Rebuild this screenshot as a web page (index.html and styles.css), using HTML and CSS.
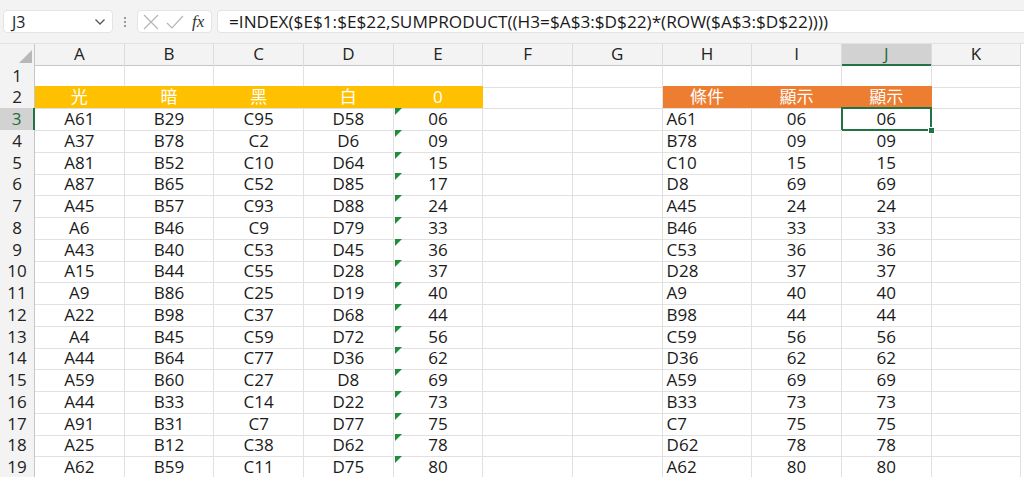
FILE: index.html
```html
<!DOCTYPE html>
<html lang="zh-Hant">
<head>
<meta charset="utf-8">
<title>Excel</title>
<link rel="stylesheet" href="styles.css">
</head>
<body>
<div class="topbar">
  <div class="namebox"><span class="ref">J3</span>
    <svg class="chev" width="12" height="8" viewBox="0 0 12 8"><path d="M1.5 1.5 L6 6 L10.5 1.5" fill="none" stroke="#555" stroke-width="1.3"/></svg>
  </div>
  <div class="dots"><i></i><i></i><i></i></div>
  <div class="fxbox">
    <svg width="18" height="18" viewBox="0 0 18 18"><path d="M2 2 L16 16 M16 2 L2 16" stroke="#b5b5b5" stroke-width="1.2" fill="none"/></svg>
    <svg width="20" height="18" viewBox="0 0 20 18"><path d="M2 10 L7 15 L18 3" stroke="#b5b5b5" stroke-width="1.2" fill="none"/></svg>
    <span class="fx">fx</span>
  </div>
  <div class="formula">=INDEX($E$1:$E$22,SUMPRODUCT((H3=$A$3:$D$22)*(ROW($A$3:$D$22))))</div>
</div>
<div class="sheet">
  <div class="r hdr"><div class="corner"></div><div>A</div><div>B</div><div>C</div><div>D</div><div>E</div><div>F</div><div>G</div><div>H</div><div>I</div><div class="selh">J</div><div>K</div></div>
  <div class="r"><div class="rh">1</div><div></div><div></div><div></div><div></div><div></div><div></div><div></div><div></div><div></div><div></div><div></div></div>
  <div class="r"><div class="rh">2</div><div class="y">光</div><div class="y">暗</div><div class="y">黑</div><div class="y">白</div><div class="y">0</div><div></div><div></div><div class="o">條件</div><div class="o">顯示</div><div class="o">顯示</div><div></div></div>
  <div class="r"><div class="rh selr">3</div><div>A61</div><div>B29</div><div>C95</div><div>D58</div><div class="t">06</div><div></div><div></div><div class="l">A61</div><div>06</div><div class="sel">06</div><div></div></div>
  <div class="r"><div class="rh">4</div><div>A37</div><div>B78</div><div>C2</div><div>D6</div><div class="t">09</div><div></div><div></div><div class="l">B78</div><div>09</div><div>09</div><div></div></div>
  <div class="r"><div class="rh">5</div><div>A81</div><div>B52</div><div>C10</div><div>D64</div><div class="t">15</div><div></div><div></div><div class="l">C10</div><div>15</div><div>15</div><div></div></div>
  <div class="r"><div class="rh">6</div><div>A87</div><div>B65</div><div>C52</div><div>D85</div><div class="t">17</div><div></div><div></div><div class="l">D8</div><div>69</div><div>69</div><div></div></div>
  <div class="r"><div class="rh">7</div><div>A45</div><div>B57</div><div>C93</div><div>D88</div><div class="t">24</div><div></div><div></div><div class="l">A45</div><div>24</div><div>24</div><div></div></div>
  <div class="r"><div class="rh">8</div><div>A6</div><div>B46</div><div>C9</div><div>D79</div><div class="t">33</div><div></div><div></div><div class="l">B46</div><div>33</div><div>33</div><div></div></div>
  <div class="r"><div class="rh">9</div><div>A43</div><div>B40</div><div>C53</div><div>D45</div><div class="t">36</div><div></div><div></div><div class="l">C53</div><div>36</div><div>36</div><div></div></div>
  <div class="r"><div class="rh">10</div><div>A15</div><div>B44</div><div>C55</div><div>D28</div><div class="t">37</div><div></div><div></div><div class="l">D28</div><div>37</div><div>37</div><div></div></div>
  <div class="r"><div class="rh">11</div><div>A9</div><div>B86</div><div>C25</div><div>D19</div><div class="t">40</div><div></div><div></div><div class="l">A9</div><div>40</div><div>40</div><div></div></div>
  <div class="r"><div class="rh">12</div><div>A22</div><div>B98</div><div>C37</div><div>D68</div><div class="t">44</div><div></div><div></div><div class="l">B98</div><div>44</div><div>44</div><div></div></div>
  <div class="r"><div class="rh">13</div><div>A4</div><div>B45</div><div>C59</div><div>D72</div><div class="t">56</div><div></div><div></div><div class="l">C59</div><div>56</div><div>56</div><div></div></div>
  <div class="r"><div class="rh">14</div><div>A44</div><div>B64</div><div>C77</div><div>D36</div><div class="t">62</div><div></div><div></div><div class="l">D36</div><div>62</div><div>62</div><div></div></div>
  <div class="r"><div class="rh">15</div><div>A59</div><div>B60</div><div>C27</div><div>D8</div><div class="t">69</div><div></div><div></div><div class="l">A59</div><div>69</div><div>69</div><div></div></div>
  <div class="r"><div class="rh">16</div><div>A44</div><div>B33</div><div>C14</div><div>D22</div><div class="t">73</div><div></div><div></div><div class="l">B33</div><div>73</div><div>73</div><div></div></div>
  <div class="r"><div class="rh">17</div><div>A91</div><div>B31</div><div>C7</div><div>D77</div><div class="t">75</div><div></div><div></div><div class="l">C7</div><div>75</div><div>75</div><div></div></div>
  <div class="r"><div class="rh">18</div><div>A25</div><div>B12</div><div>C38</div><div>D62</div><div class="t">78</div><div></div><div></div><div class="l">D62</div><div>78</div><div>78</div><div></div></div>
  <div class="r"><div class="rh">19</div><div>A62</div><div>B59</div><div>C11</div><div>D75</div><div class="t">80</div><div></div><div></div><div class="l">A62</div><div>80</div><div>80</div><div></div></div>
</div>
</body>
</html>
```
FILE: styles.css
```css
html, body {
  margin: 0;
  padding: 0;
  height: 477px;
  overflow: hidden;
  background: #ffffff;
  font-family: "Open Sans", "Noto Sans CJK TC", sans-serif;
  color: #1a1a1a;
}

.topbar {
  height: 44px;
  box-sizing: border-box;
  background: #f3f3f3;
  border-bottom: 1px solid #e2e2e2;
  display: flex;
  align-items: center;
  padding: 0 0 0 3px;
}

.namebox {
  width: 110px;
  height: 23px;
  box-sizing: border-box;
  background: #fff;
  border: 1px solid #e4e4e4;
  border-radius: 4px;
  display: flex;
  align-items: center;
  justify-content: space-between;
  padding: 0 6px 0 8px;
  font-size: 16px;
  color: #222;
}

.dots {
  width: 24px;
  display: flex;
  flex-direction: column;
  align-items: center;
  gap: 2px;
}
.dots i {
  width: 2px;
  height: 2px;
  background: #9a9a9a;
  display: block;
}

.fxbox {
  width: 75px;
  height: 23px;
  box-sizing: border-box;
  background: #fff;
  border: 1px solid #e4e4e4;
  border-radius: 4px;
  display: flex;
  align-items: center;
  gap: 5px;
  padding: 0 4px 0 4px;
}
.fx {
  font-family: "Liberation Serif", "DejaVu Serif", serif;
  font-style: italic;
  font-size: 17px;
  color: #333;
  margin-left: 2px;
}

.formula {
  flex: 1;
  height: 23px;
  margin-left: 5px;
  box-sizing: border-box;
  background: #fff;
  border: 1px solid #e4e4e4;
  border-right: none;
  border-radius: 4px 0 0 4px;
  font-size: 17.2px;
  line-height: 21px;
  padding-left: 11px;
  white-space: nowrap;
  overflow: hidden;
  color: #1a1a1a;
}

.sheet {
  display: flex;
  flex-direction: column;
}

.r {
  display: grid;
  grid-template-columns: 35px repeat(11, 89.67px) 1fr;
  height: 21.75px;
}
.r > div {
  box-sizing: border-box;
  border-right: 1px solid #e1e1e1;
  border-bottom: 1px solid #e1e1e1;
  font-size: 17px;
  line-height: 22px;
  text-align: center;
  white-space: nowrap;
  position: relative;
}

.r.hdr {
  height: 20.5px;
}
.r.hdr > div {
  background: #f3f3f3;
  border-bottom: 1px solid #c6c6c6;
  border-right: 1px solid #dcdcdc;
  line-height: 20px;
  color: #222;
}
.r.hdr > div.corner {
  border-right: 1px solid #c6c6c6;
}
.corner::after {
  content: "";
  position: absolute;
  right: 2px;
  bottom: 2px;
  width: 0;
  height: 0;
  border-left: 13px solid transparent;
  border-bottom: 13px solid #b8b8b8;
}
.r.hdr > div.selh {
  background: #d2d2d2;
  border-bottom: 2px solid #217346;
  color: #1e6b3a;
}

.r > div.rh {
  background: #f3f3f3;
  border-right: 1px solid #c6c6c6;
  border-bottom: 1px solid #dcdcdc;
  color: #222;
}
.r > div.rh.selr {
  background: #d2d2d2;
  border-right: 2px solid #217346;
  color: #1e6b3a;
}

.r > div.y {
  background: #ffc000;
  border-right-color: #ffc000;
  color: #fff;
}
.r > div.o {
  background: #ed7d31;
  border-right-color: #ed7d31;
  color: #fff;
}
.r > div.l {
  text-align: left;
  padding-left: 4px;
}

.t::before {
  content: "";
  position: absolute;
  left: 1px;
  top: 0;
  width: 0;
  height: 0;
  border-top: 7px solid #1b8f3a;
  border-right: 7px solid transparent;
}

.sel::after {
  content: "";
  position: absolute;
  left: -1px;
  top: -1px;
  right: -1px;
  bottom: -1px;
  border: 2px solid #217346;
}
.sel::before {
  content: "";
  position: absolute;
  right: -4px;
  bottom: -4px;
  width: 5px;
  height: 5px;
  background: #217346;
  border: 1px solid #fff;
  z-index: 2;
}
```
